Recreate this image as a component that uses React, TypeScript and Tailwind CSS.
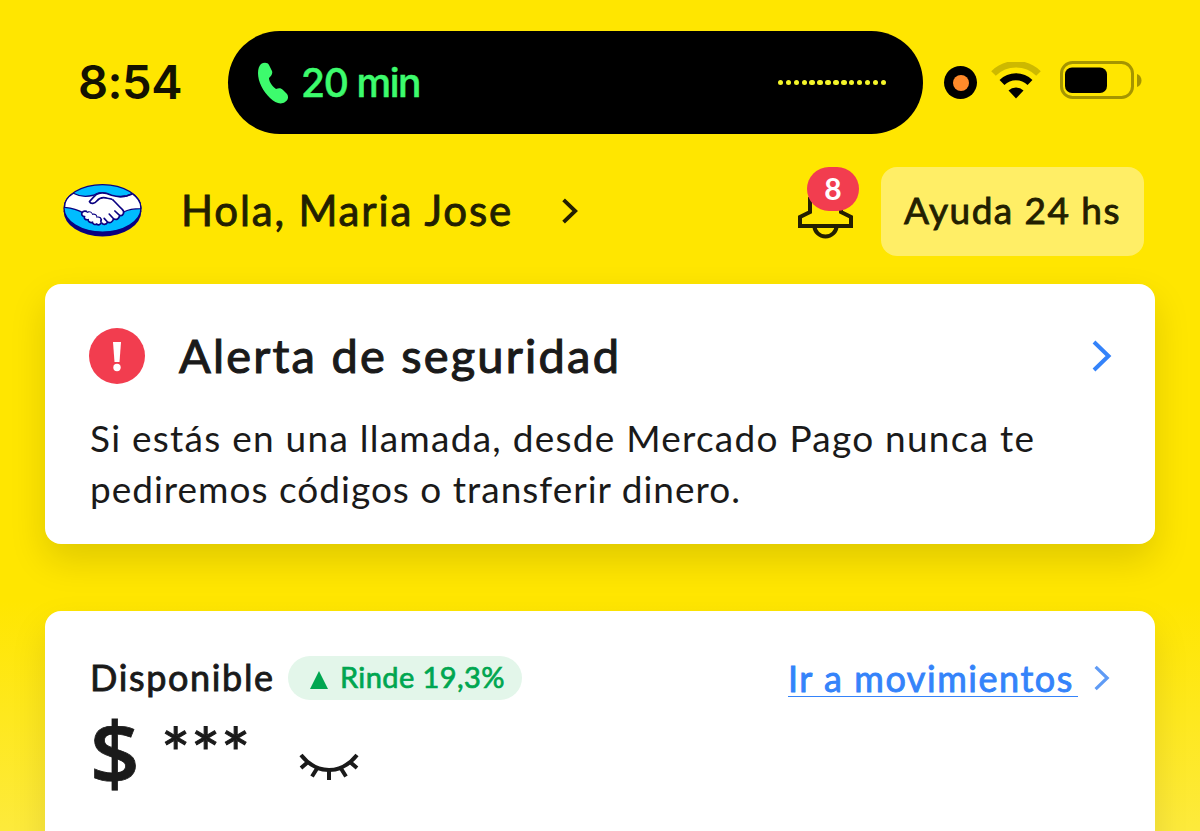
import React from "react";

const islandDots = Array.from({ length: 14 }, (_, i) => i);

const Chevron = ({ className, strokeWidth = 4 }: { className: string; strokeWidth?: number }) => (
    <svg viewBox="0 0 20 32" fill="none" stroke="currentColor" strokeWidth={strokeWidth} className={className}>
        <path d="M2 2L16.500 16L2 30" />
    </svg>
);

const HandshakeLogo = () => (
    <svg viewBox="39 38 236 160" className="mb-[3px] h-[54px] w-[79px]">
        <ellipse cx="157" cy="122" rx="116" ry="75" fill="#0a0080" />
        <ellipse cx="157" cy="113" rx="115" ry="71" fill="#00bcff" stroke="#0a0080" strokeWidth="4" />
        <path
            d="M70 68C88 78 106 80 130 74C145 64 165 66 180 74C205 82 228 79 246 69C264 82 273 98 271 114C250 114 232 118 220 124L160 150L98 126C82 116 62 112 44 110C43 94 54 78 70 68Z"
            fill="#fff"
            stroke="#0a0080"
            strokeWidth="4"
        />
        <path
            d="M96 126C100 120 108 120 112 124C120 120 126 124 128 130C136 128 141 133 141 138C149 137 156 143 152 151C157 158 146 166 140 160C134 163 128 160 127 155C120 157 114 153 114 147C106 148 101 144 103 138C96 137 93 131 96 126Z"
            fill="#fff"
            stroke="#0a0080"
            strokeWidth="5"
        />
        <path
            d="M116 94L142 69C160 62 176 70 188 84L219 120C224 130 216 138 208 134C207 144 199 149 190 144C188 154 180 158 172 154C170 163 160 164 154 158L156 146C154 139 148 137 142 138C140 130 134 128 128 129C124 122 118 120 111 123Z"
            fill="#fff"
        />
        <path
            d="M180 80C190 88 202 103 216 116C225 124 218 138 208 134C207 144 199 149 190 144C188 154 180 158 172 154C168 163 158 162 155 157M208 134L194 121M190 144L177 130M172 154L162 143"
            fill="none"
            stroke="#0a0080"
            strokeWidth="5"
            strokeLinecap="round"
        />
        <path
            d="M246 70C222 81 204 80 184 74C166 66 150 64 138 72C130 79 124 86 118 93C122 101 134 99 140 91C148 81 162 80 172 83L186 86"
            fill="#fff"
            stroke="#0a0080"
            strokeWidth="5"
            strokeLinejoin="round"
        />
    </svg>
);

const StatusBar = () => (
    <div className="flex h-[103px] items-center">
        <span className="w-[150px] pb-[2px] font-[Inter] text-[47px] font-semibold leading-none tracking-[-0.500px] text-[#141200]">
            8:54
        </span>
        <div className="flex h-[103px] w-[695px] items-center rounded-full bg-black pl-[29px] pr-[37px]">
            <svg viewBox="0 0 32 42" className="h-[42px] w-8 text-[#3dfb6d]" fill="currentColor">
                <path d="M4 2C7 0 11 .5 12 3L15 9C16 12 14 14 12 16C12 20 16 25 19 27C22 26 24 26 26 28L30 32C32 35 31 38 28 40C24 43 18 41 13 36C6 29 1 20 1 11C1 7 2 4 4 2Z" />
            </svg>
            <span className="mb-px ml-[12px] font-[Inter] text-[39px] font-medium leading-none tracking-[-1.400px] text-[#3dfb6d] [-webkit-text-stroke:0.500px_currentColor]">
                20 min
            </span>
            <div className="ml-auto flex gap-[2.400px]">
                {islandDots.map((dot) => (
                    <span key={dot} className="size-[5.500px] rounded-full bg-[#f4f52a]" />
                ))}
            </div>
        </div>
        <div className="ml-[21px] flex size-[33px] items-center justify-center rounded-full bg-black">
            <span className="size-4 rounded-full bg-[#ff8a2a]" />
        </div>
        <svg viewBox="0 0 50 37" className="ml-[14px] mb-1 h-[37px] w-[50px]" fill="none">
            <path d="M2.500 11.500A32 32 0 0 1 47.500 11.500" stroke="#cdb900" strokeWidth="6.500" />
            <path d="M11 20.500A20 20 0 0 1 39 20.500" stroke="#000" strokeWidth="7" />
            <path d="M17.500 28.500A11 11 0 0 1 32.500 28.500L25 36.500Z" fill="#000" />
        </svg>
        <svg viewBox="0 0 82 38" className="ml-[19px] mb-[5px] h-[38px] w-[82px]">
            <rect x="1.500" y="1.500" width="71" height="35" rx="11" fill="none" stroke="#a59500" strokeWidth="3" />
            <rect x="5" y="6.500" width="42" height="25.500" rx="7" fill="#000" />
            <path d="M77 13C83 15 83 24 77 26Z" fill="#a59500" />
        </svg>
    </div>
);

const Header = () => (
    <header className="mt-[33px] flex h-[89px] items-center">
        <HandshakeLogo />
        <span className="mb-1 ml-[39px] w-[381px] whitespace-nowrap text-[42px] leading-none tracking-[1.850px] text-[#231f00] [-webkit-text-stroke:0.900px_currentColor]">
            Hola, Maria Jose
        </span>
        <Chevron className="mb-[2px] h-[26px] w-[16px] text-[#231f00]" strokeWidth={4.800} />
        <div className="relative ml-auto h-[89px] w-[61px]">
            <svg viewBox="0 0 61 89" className="h-[89px] w-[61px]" fill="none" stroke="#231f00" strokeWidth="4">
                <path d="M12 30V45L2 50V59H53V50L43 45V30" />
                <path d="M16.500 59A11 10.500 0 0 0 38.500 59" />
            </svg>
            <span className="absolute left-[9px] top-0 flex h-[44px] w-[52px] items-center justify-center rounded-full bg-[#f23d4f] pb-[2px] text-[30px] font-bold text-white">
                8
            </span>
        </div>
        <button className="ml-[22px] flex h-[89px] w-[263px] items-center justify-center whitespace-nowrap rounded-[16px] bg-[#ffee66] pb-1 text-[37px] tracking-[1.450px] text-[#231f00] [-webkit-text-stroke:0.900px_currentColor]">
            Ayuda 24 hs
        </button>
    </header>
);

const SecurityAlert = () => (
    <section className="mt-[28px] h-[260px] rounded-[16px] bg-white px-[45px] pt-[44px] shadow-[0_16px_36px_rgba(0,0,0,0.13)]">
        <div className="flex h-[56px] items-center">
            <svg viewBox="0 0 56 56" className="-ml-px size-14">
                <circle cx="28" cy="28" r="28" fill="#f23d4f" />
                <path d="M24 14H32L30.500 34H25.500Z" fill="#fff" />
                <circle cx="28" cy="39.500" r="3.700" fill="#fff" />
            </svg>
            <h2 className="mb-[2px] ml-[34px] whitespace-nowrap text-[47px] leading-none tracking-[2.200px] [-webkit-text-stroke:1.100px_currentColor]">
                Alerta de seguridad
            </h2>
            <Chevron className="-mr-[2px] ml-auto h-8 w-5 text-[#3483fa]" />
        </div>
        <p className="mt-7 whitespace-nowrap text-[37px] leading-[51px]">
            <span className="tracking-[1.250px]">Si estás en una llamada, desde Mercado Pago nunca te</span>
            <br />
            <span className="tracking-[1px]">pediremos códigos o transferir dinero.</span>
        </p>
    </section>
);

const Balance = () => (
    <section className="mt-[67px] h-[300px] rounded-t-[16px] bg-white px-[45px] pt-[45px] shadow-[0_16px_36px_rgba(0,0,0,0.10)]">
        <div className="flex h-11 items-center">
            <span className="mb-[2px] w-[198px] whitespace-nowrap text-[36px] leading-none tracking-[1.650px] [-webkit-text-stroke:0.900px_currentColor]">
                Disponible
            </span>
            <span className="flex h-11 w-[234px] items-center whitespace-nowrap rounded-full bg-[#e3f6ea] pl-[22px] text-[29px] tracking-[0.400px] text-[#00a650]">
                <svg viewBox="0 0 18 18" className="mr-3 mt-1 size-[18px]" fill="currentColor">
                    <path d="M9 0L18 18H0Z" />
                </svg>
                <span className="mb-[2px] [-webkit-text-stroke:0.700px_currentColor]">Rinde 19,3%</span>
            </span>
            <a
                href="#"
                className="ml-auto mb-[3px] h-[41px] w-[290px] whitespace-nowrap border-b border-[#3483fa] text-[36px] leading-[44px] tracking-[1.550px] text-[#3483fa] [-webkit-text-stroke:0.900px_currentColor]"
            >
                Ir a movimientos
            </a>
            <Chevron className="ml-4 h-[26px] w-4 text-[#5f9bf5]" />
        </div>
        <div className="flex">
            <span className="w-[48px] text-center font-['Open_Sans'] text-[87px] font-semibold leading-[102px] [-webkit-text-stroke:0.800px_currentColor]">
                $
            </span>
            <span className="ml-[23px] mt-px w-[90px] text-[69px] leading-[103px] tracking-[0.700px] [-webkit-text-stroke:1px_currentColor]">
                ***
            </span>
            <svg viewBox="0 0 60 28" className="ml-[48px] mt-[53px] h-7 w-[60px]" fill="none" stroke="currentColor" strokeWidth="4">
                <path d="M2 2C18 22 42 22 58 2" />
                <path d="M9 9L2 15M18 15.500L13 23.500M30 17V27M42 15.500L47 23.500M51 9L58 15" />
            </svg>
        </div>
    </section>
);

const App = () => {
    return (
        <main className="h-[831px] overflow-hidden bg-[linear-gradient(#ffe600_0,#ffe600_600px,#fdea3c_831px)] px-[45px] pt-[31px] font-[Lato,sans-serif] text-[#1a1a1a]">
            <div className="pl-[33px]">
                <StatusBar />
            </div>
            <div className="pl-[18px] pr-[11px]">
                <Header />
            </div>
            <SecurityAlert />
            <Balance />
        </main>
    );
};

export default App;
